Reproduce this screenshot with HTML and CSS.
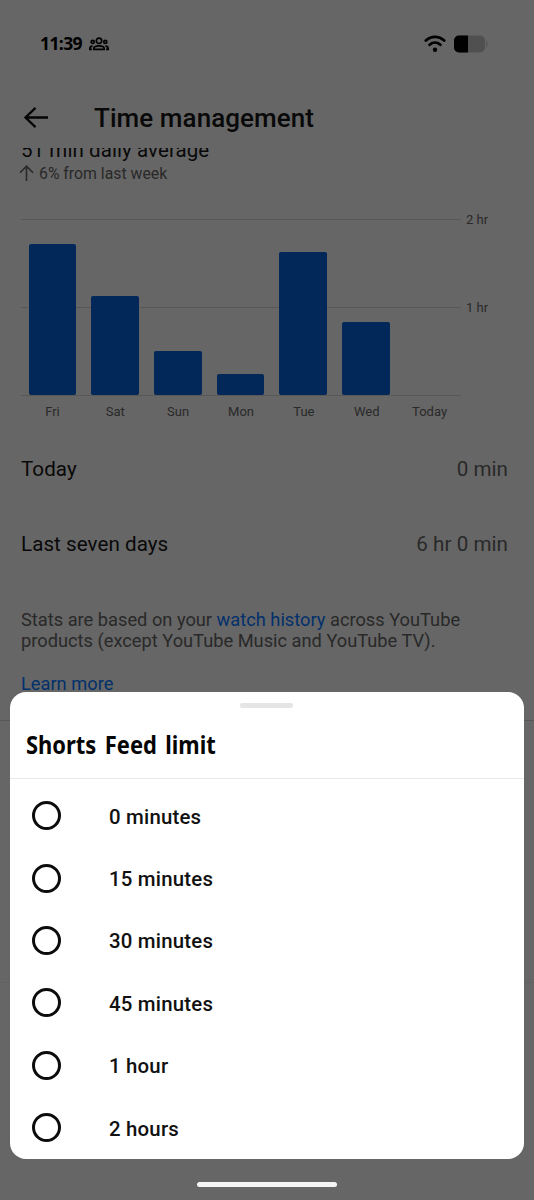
FILE: index.html
```html
<!DOCTYPE html>
<html lang="en">
<head>
<meta charset="utf-8">
<title>Time management</title>
<link rel="stylesheet" href="styles.css">
</head>
<body>
<div class="screen">
  <header class="status-bar">
    <span class="clock">11:39</span>
    <svg class="people" width="20" height="14" viewBox="0 0 20 14" fill="none" stroke="#000" stroke-width="1.700">
      <circle cx="10" cy="3.800" r="2.700"/><circle cx="3.700" cy="4.900" r="1.500"/><circle cx="16.300" cy="4.900" r="1.500"/>
      <path d="M4.800 12.400v-.8c0-1.600 2.400-2.700 5.200-2.700s5.200 1.100 5.200 2.700v.8zM.9 13.200v-1.700c0-1.400 1-2.400 2.700-2.400M19.100 13.200v-1.700c0-1.400-1-2.400-2.700-2.400M0 12.400h3M17 12.400h3"/>
    </svg>
    <svg class="wifi" width="22" height="18" viewBox="0 0 22 18" fill="none" stroke="#000" stroke-width="2.700" stroke-linecap="round">
      <path d="M1.800 5.600C7.200.6 14.800.6 20.200 5.600M5.600 9.800c3.200-2.800 7.600-2.800 10.800 0"/>
      <circle cx="11" cy="14.700" r="2.200" fill="#000" stroke="none"/>
    </svg>
    <svg class="battery" width="36" height="18" viewBox="0 0 36 18">
      <rect x="1" y=".5" width="31" height="17" rx="5" fill="#505050"/>
      <path d="M15 .5H6a5 5 0 0 0-5 5v7a5 5 0 0 0 5 5h9z" fill="#000"/>
      <path d="M33.300 5.500c1.500.5 1.500 6.500 0 7z" fill="#505050"/>
    </svg>
  </header>
  <div class="app-bar">
    <svg width="26" height="24" viewBox="0 0 26 24" fill="none" stroke="#050505" stroke-width="2.300"><path d="M25 11.500H2.500M12.500 1.800 2.500 11.500 12.500 21.200"/></svg>
    <h1 class="title"><span>Time management</span></h1>
  </div>
  <main class="content">
    <div class="average"><span>51 min daily average</span></div>
    <div class="change">
      <svg width="15" height="17" viewBox="0 0 15 17" fill="none" stroke="#292929" stroke-width="1.600"><path d="M7.500 16V1.200M1 7.700l6.500-6.500L14 7.700"/></svg>
      <span>6% from last week</span>
    </div>
    <section class="chart">
      <div class="plot">
        <div class="bar" style="height:151px"></div>
        <div class="bar" style="height:99px"></div>
        <div class="bar" style="height:44px"></div>
        <div class="bar" style="height:21px"></div>
        <div class="bar" style="height:143px"></div>
        <div class="bar" style="height:73px"></div>
        <div class="bar" style="height:0"></div>
      </div>
      <div class="scale"><span>2 hr</span><span>1 hr</span></div>
      <div class="days"><span>Fri</span><span>Sat</span><span>Sun</span><span>Mon</span><span>Tue</span><span>Wed</span><span>Today</span></div>
    </section>
    <div class="stat"><span>Today</span><span class="value">0 min</span></div>
    <div class="stat"><span>Last seven days</span><span class="value">6 hr 0 min</span></div>
    <p class="note">Stats are based on your <a>watch history</a> across YouTube<br>products (except YouTube Music and YouTube TV).<br><a class="learn">Learn more</a></p>
    <div class="section-end"></div>
    <div class="section-next"></div>
  </main>
  <section class="sheet">
    <div class="handle"></div>
    <h2 class="sheet-title"><span>Shorts Feed limit</span></h2>
    <ul class="options">
      <li><i class="radio"></i><span>0 minutes</span></li>
      <li><i class="radio"></i><span>15 minutes</span></li>
      <li><i class="radio"></i><span>30 minutes</span></li>
      <li><i class="radio"></i><span>45 minutes</span></li>
      <li><i class="radio"></i><span>1 hour</span></li>
      <li><i class="radio"></i><span>2 hours</span></li>
    </ul>
  </section>
  <div class="nav-pill"></div>
</div>
</body>
</html>
```
FILE: styles.css
```css
* { box-sizing: border-box; }
body { margin: 0; font-family: Roboto, "Liberation Sans", sans-serif; background: #666; }
.screen { position: relative; width: 534px; height: 1200px; overflow: hidden; background: #666; color: #090909; display: flex; flex-direction: column; }
.status-bar { height: 88px; display: flex; align-items: center; padding: 0 45px 0 40px; }
.clock { font: 700 17.500px/20px "Open Sans", sans-serif; color: #000; letter-spacing: -.6px; width: 49px; padding-bottom: 2px; }
.wifi { margin-left: auto; margin-right: 7px; }
.app-bar { height: 60px; display: flex; align-items: center; padding-left: 23px; gap: 45px; }
.title { margin: 0; font-size: 26px; font-weight: 500; line-height: 30px; letter-spacing: .07px; }
.content { flex: 1; overflow: hidden; }
.average { height: 15px; display: flex; align-items: flex-end; padding-left: 21px; font-size: 20.500px; letter-spacing: .08px; line-height: 26px; white-space: nowrap; }
.change { height: 22px; display: flex; align-items: center; gap: 5px; padding-left: 19px; font-size: 15.800px; line-height: 18px; color: #292929; padding-bottom: 1px; }
.chart { margin: 34px 0 0 21px; display: grid; grid-template: 177px 32px / 440px 60px; }
.plot { display: flex; align-items: flex-end; justify-content: space-around; padding: 0 1px 1px 0; background: linear-gradient(#585858, #585858) 0 0 / 100% 1px no-repeat, linear-gradient(#585858, #585858) 0 88px / 100% 1px no-repeat, linear-gradient(#585858, #585858) 0 100% / 100% 1px no-repeat; }
.bar { width: 47.500px; border-radius: 2px; background: #022859; }
.scale { font-size: 13px; line-height: 16px; color: #292929; padding-left: 5px; margin-top: -7px; display: flex; flex-direction: column; gap: 72px; }
.days { display: flex; font-size: 13px; line-height: 32px; color: #292929; }
.days span { flex: 1; text-align: center; }
.stat { height: 75px; display: flex; align-items: center; justify-content: space-between; padding: 0 26px 0 21px; font-size: 20.600px; line-height: 24px; letter-spacing: .05px; }
.chart + .stat { margin-top: 3px; }
.value { color: #292929; }
.note { margin: 28px 0 0 21px; font-size: 18.250px; line-height: 21.300px; color: #292929; white-space: nowrap; }
.note a { color: #02306b; }
.note .learn { display: block; margin-top: 21px; }
.section-end { height: 1px; background: #565656; margin-top: 26px; }
.section-next { height: 262px; border-bottom: 1px solid #616161; }
.sheet { position: absolute; left: 10px; top: 691.500px; width: 513.500px; height: 467px; border-radius: 16px; background: #fff; }
.handle { width: 53px; height: 5px; border-radius: 2px; background: #e5e5e5; margin: 11px auto 0; }
.sheet-title { margin: 0; height: 71px; padding-left: 16px; border-bottom: 1.500px solid #e8e8e8; font: 700 24.500px/73px "Noto Sans", sans-serif; color: #050505; white-space: nowrap; word-spacing: 3px; }
.sheet-title span { display: inline-block; transform-origin: left; transform: scaleX(.895); }
.options { list-style: none; margin: 7px 0 0; padding: 0; }
.options li { height: 62.400px; display: flex; align-items: center; gap: 48px; padding-left: 22px; font-size: 20.400px; letter-spacing: .2px; font-weight: 500; color: #111; }
.radio { width: 29px; height: 29px; border: 3px solid #0c0c0c; border-radius: 50%; margin-bottom: 2px; }
.nav-pill { position: absolute; left: 197px; top: 1182px; width: 140px; height: 5px; border-radius: 3px; background: #f4f4f4; }
```
